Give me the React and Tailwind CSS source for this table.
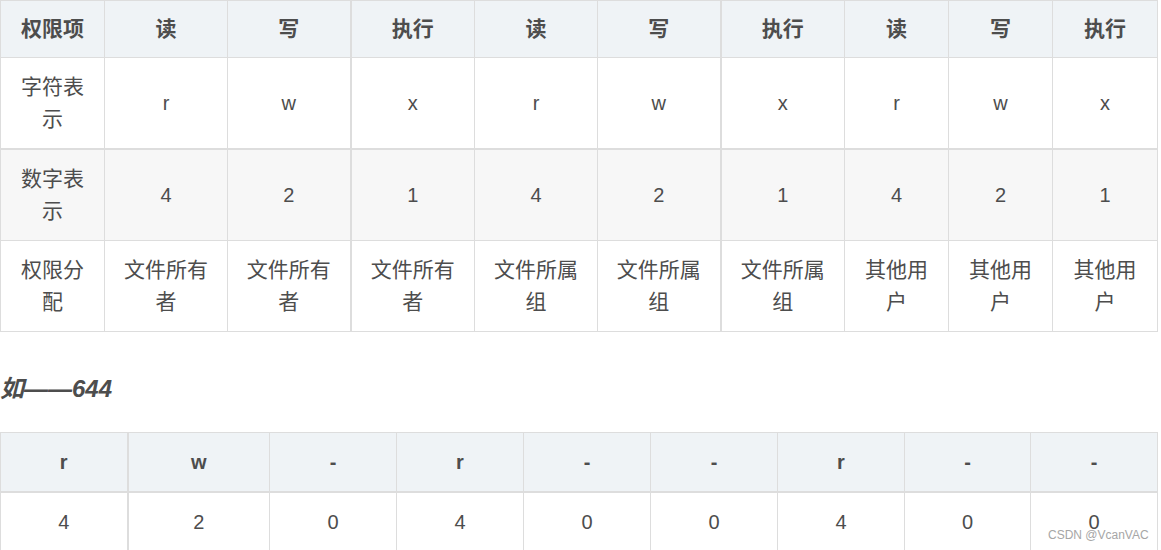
const font = { fontFamily: '"Liberation Sans", "Noto Sans CJK SC", sans-serif' }

const heads = ['权限项', '读', '写', '执行', '读', '写', '执行', '读', '写', '执行']
const rows = [
  ['字符表示', 'r', 'w', 'x', 'r', 'w', 'x', 'r', 'w', 'x'],
  ['数字表示', '4', '2', '1', '4', '2', '1', '4', '2', '1'],
  ['权限分配', '文件所有者', '文件所有者', '文件所有者', '文件所属组', '文件所属组', '文件所属组', '其他用户', '其他用户', '其他用户'],
]
const widths1 = ['w-[104px]', 'w-[123px]', 'w-[123px]', 'w-[124px]', 'w-[123px]', 'w-[123px]', 'w-[124px]', 'w-[104px]', 'w-[104px]', 'w-[105px]']

const heads2 = ['r', 'w', '-', 'r', '-', '-', 'r', '-', '-']
const vals2 = ['4', '2', '0', '4', '0', '0', '4', '0', '0']
const widths2 = ['w-[127px]', 'w-[142px]', 'w-[127px]', 'w-[127px]', 'w-[127px]', 'w-[127px]', 'w-[127px]', 'w-[126px]', 'w-[127px]']

export default function App() {
  return (
    <div className="relative w-[1161px] h-[550px] overflow-hidden bg-white text-[#4d4d4d]" style={font}>
      <table className="table-fixed border-collapse w-[1158px] text-[20px] leading-[32px] text-center">
        <colgroup>
          {widths1.map((w, i) => (
            <col key={i} className={w} />
          ))}
        </colgroup>
        <thead>
          <tr className="bg-[#eff3f6]">
            {heads.map((h, i) => (
              <th
                key={i}
                className={`border border-[#dddddd] px-4 py-3 font-bold text-[21px] ${i === 3 || i === 6 ? 'border-l-2' : ''}`}
              >
                {h}
              </th>
            ))}
          </tr>
        </thead>
        <tbody>
          {rows.map((r, ri) => (
            <tr key={ri} className={ri === 1 ? 'bg-[#f7f7f7]' : 'bg-white'}>
              {r.map((c, i) => (
                <td
                  key={i}
                  className={`border border-[#dddddd] px-4 py-[13px] font-normal ${i === 0 || ri === 2 ? 'text-[21px]' : ''} ${i === 3 || i === 6 ? 'border-l-2' : ''} ${ri === 0 ? 'border-b-2' : ''}`}
                >
                  {c}
                </td>
              ))}
            </tr>
          ))}
        </tbody>
      </table>

      <h4 className="mt-[41px] mb-[27px] text-[24px] leading-[32px] font-bold italic text-[#4d4d4d]">如——644</h4>

      <table className="table-fixed border-collapse w-[1158px] text-[20px] leading-[32px] text-center">
        <colgroup>
          {widths2.map((w, i) => (
            <col key={i} className={w} />
          ))}
        </colgroup>
        <thead>
          <tr className="bg-[#eff3f6]">
            {heads2.map((h, i) => (
              <th
                key={i}
                className={`border border-[#dddddd] border-b-2 px-4 py-[13px] font-bold ${i === 1 ? 'border-l-2' : ''}`}
              >
                {h}
              </th>
            ))}
          </tr>
        </thead>
        <tbody>
          <tr className="bg-white">
            {vals2.map((v, i) => (
              <td
                key={i}
                className={`border border-[#dddddd] px-4 py-[13px] ${i === 1 ? 'border-l-2' : ''}`}
              >
                {v}
              </td>
            ))}
          </tr>
        </tbody>
      </table>

      <div className="absolute left-[1048px] top-[527px] text-[12px] leading-[16px] text-[#a6a6a6]">CSDN @VcanVAC</div>
    </div>
  )
}
